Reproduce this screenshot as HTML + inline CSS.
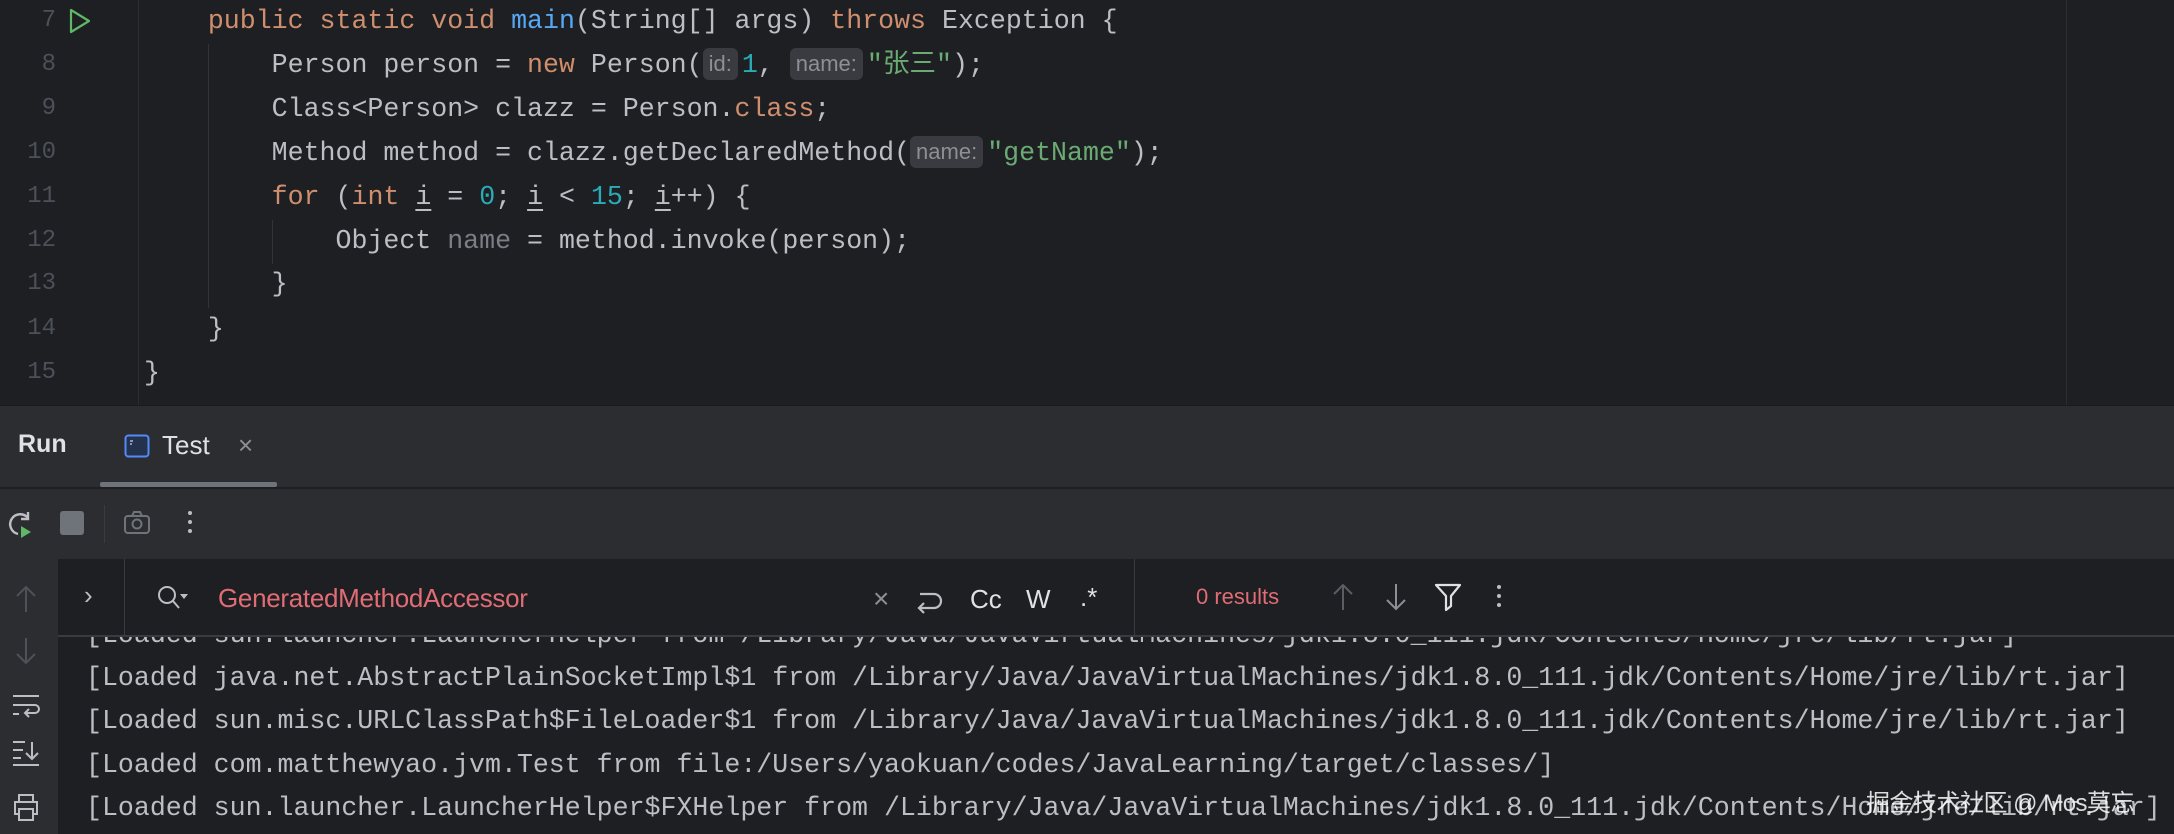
<!DOCTYPE html>
<html><head><meta charset="utf-8"><style>
*{margin:0;padding:0;box-sizing:border-box}
body{width:2174px;height:834px;overflow:hidden;background:#1e1f22;position:relative;font-family:"Liberation Mono","Noto Sans CJK SC",monospace;}
.abs{position:absolute}
.code{position:absolute;left:144px;font-size:26.6px;line-height:44px;height:44px;white-space:pre;color:#bcbec4}
.ln{position:absolute;width:56px;text-align:right;font-size:24px;color:#4b5059;line-height:44px}
.k{color:#cf8e6d}.m{color:#56a8f5}.s{color:#6aab73}.n{color:#2aacb8}.g{color:#7a7e85}
.h{display:inline-block;background:#393b40;color:#8c8f94;font-family:"Liberation Sans",sans-serif;font-size:22px;line-height:32px;padding:0 6px;border-radius:6px;margin-right:4px;vertical-align:1px}
.u{text-decoration:underline;text-underline-offset:5px}
.con{position:absolute;left:86px;font-size:26.6px;line-height:40px;white-space:pre;color:#bcbec4}
.ic{position:absolute;color:#8c8f94;font-family:"Liberation Sans",sans-serif}
</style></head><body>
<!-- editor -->
<div class="abs" style="left:138px;top:0;width:1px;height:405px;background:#2b2d30"></div>
<div class="abs" style="left:2066px;top:0;width:1px;height:405px;background:#2b2d30"></div>
<div class="abs" style="left:208px;top:44px;width:1px;height:264px;background:#313438"></div>
<div class="abs" style="left:272px;top:220px;width:1px;height:44px;background:#313438"></div>
<div class="ln" style="top:-1px;left:0">7</div>
<svg class="abs" style="left:68px;top:8px" width="24" height="26"><path d="M3 2 L21 13 L3 24 Z" fill="none" stroke="#5fb865" stroke-width="2.2" stroke-linejoin="round"/></svg>
<div class="ln" style="top:43px">8</div>
<div class="ln" style="top:87px">9</div>
<div class="ln" style="top:131px">10</div>
<div class="ln" style="top:175px">11</div>
<div class="ln" style="top:219px">12</div>
<div class="ln" style="top:262px">13</div>
<div class="ln" style="top:307px">14</div>
<div class="ln" style="top:351px">15</div>
<div class="code" style="top:-1px">    <span class="k">public static void</span> <span class="m">main</span>(String[] args) <span class="k">throws</span> Exception {</div>
<div class="code" style="top:43px">        Person person = <span class="k">new</span> Person(<span class="h">id:</span><span class="n">1</span>, <span class="h">name:</span><span class="s">"张三"</span>);</div>
<div class="code" style="top:87px">        Class&lt;Person&gt; clazz = Person.<span class="k">class</span>;</div>
<div class="code" style="top:131px">        Method method = clazz.getDeclaredMethod(<span class="h">name:</span><span class="s">"getName"</span>);</div>
<div class="code" style="top:175px">        <span class="k">for</span> (<span class="k">int</span> <span class="u">i</span> = <span class="n">0</span>; <span class="u">i</span> &lt; <span class="n">15</span>; <span class="u">i</span>++) {</div>
<div class="code" style="top:219px">            Object <span class="g">name</span> = method.invoke(person);</div>
<div class="code" style="top:262px">        }</div>
<div class="code" style="top:307px">    }</div>
<div class="code" style="top:351px">}</div>
<!-- tab bar -->
<div class="abs" style="left:0;top:405px;width:2174px;height:83px;background:#2b2d30;border-top:1px solid #1a1b1d;border-bottom:1px solid #1e1f22"></div>
<div class="abs" style="left:18px;top:430px;font-family:'Liberation Sans',sans-serif;font-weight:bold;font-size:25px;color:#dfe1e5">Run</div>
<svg class="abs" style="left:124px;top:434px" width="26" height="24"><rect x="1.5" y="1.5" width="23" height="21" rx="3" fill="#25324d" stroke="#548af7" stroke-width="2"/><path d="M6 7h3M6 10h2" stroke="#9db8f0" stroke-width="1.5"/></svg>
<div class="abs" style="left:162px;top:430px;font-family:'Liberation Sans',sans-serif;font-size:26px;color:#dfe1e5">Test</div>
<div class="ic" style="left:238px;top:430px;font-size:26px">×</div>
<div class="abs" style="left:100px;top:482px;width:177px;height:5px;background:#6f737a;border-radius:2px"></div>
<!-- toolbar -->
<div class="abs" style="left:0;top:489px;width:2174px;height:70px;background:#2b2d30"></div>
<svg class="abs" style="left:4px;top:508px" width="32" height="32"><path d="M24 10 A10 10 0 1 0 14 26" fill="none" stroke="#bcbec4" stroke-width="2.4"/><path d="M24 4 V11 H17" fill="none" stroke="#bcbec4" stroke-width="2.4"/><path d="M17 18 L27 24 L17 30 Z" fill="#5fb865"/></svg>
<div class="abs" style="left:60px;top:511px;width:24px;height:24px;background:#6f737a;border-radius:3px"></div>
<div class="abs" style="left:104px;top:505px;width:1px;height:38px;background:#393b40"></div>
<svg class="abs" style="left:123px;top:510px" width="28" height="26"><rect x="2" y="6" width="24" height="17" rx="3" fill="none" stroke="#6f737a" stroke-width="2"/><path d="M9 6 L11 2 H17 L19 6" fill="none" stroke="#6f737a" stroke-width="2"/><circle cx="14" cy="14" r="4.5" fill="none" stroke="#6f737a" stroke-width="2"/></svg>
<div class="abs" style="left:188px;top:511px;width:4px;height:4px;background:#bcbec4;border-radius:2px;box-shadow:0 9px 0 #bcbec4,0 18px 0 #bcbec4"></div>
<!-- console (under search bar) -->
<div style="position:absolute;left:0;top:559px;width:2174px;height:275px;overflow:hidden">
<div class="con" style="top:56px">[Loaded sun.launcher.LauncherHelper from /Library/Java/JavaVirtualMachines/jdk1.8.0_111.jdk/Contents/Home/jre/lib/rt.jar]</div>
<div class="con" style="top:99px">[Loaded java.net.AbstractPlainSocketImpl$1 from /Library/Java/JavaVirtualMachines/jdk1.8.0_111.jdk/Contents/Home/jre/lib/rt.jar]</div>
<div class="con" style="top:142px">[Loaded sun.misc.URLClassPath$FileLoader$1 from /Library/Java/JavaVirtualMachines/jdk1.8.0_111.jdk/Contents/Home/jre/lib/rt.jar]</div>
<div class="con" style="top:186px">[Loaded com.matthewyao.jvm.Test from file:/Users/yaokuan/codes/JavaLearning/target/classes/]</div>
<div class="con" style="top:229px">[Loaded sun.launcher.LauncherHelper$FXHelper from /Library/Java/JavaVirtualMachines/jdk1.8.0_111.jdk/Contents/Home/jre/lib/rt.jar]</div>
</div>
<!-- left strip -->
<div class="abs" style="left:0;top:559px;width:58px;height:275px;background:#2b2d30"></div>
<svg class="abs" style="left:12px;top:584px" width="28" height="30"><path d="M14 28 V3 M5 12 L14 3 L23 12" fill="none" stroke="#4e5157" stroke-width="2"/></svg>
<svg class="abs" style="left:12px;top:636px" width="28" height="30"><path d="M14 2 V27 M5 18 L14 27 L23 18" fill="none" stroke="#4e5157" stroke-width="2"/></svg>
<svg class="abs" style="left:11px;top:692px" width="30" height="28"><path d="M2 4 H28 M2 13 H24 A4 4 0 0 1 24 21 H14 M18 17 L14 21 L18 25 M2 22 H8" fill="none" stroke="#bcbec4" stroke-width="2"/></svg>
<svg class="abs" style="left:11px;top:739px" width="30" height="28"><path d="M2 3 H14 M2 11 H12 M2 19 H10 M2 26 H28 M21 3 V20 M15 14 L21 20 L27 14" fill="none" stroke="#bcbec4" stroke-width="2"/></svg>
<svg class="abs" style="left:11px;top:792px" width="30" height="30"><path d="M8 9 V3 H22 V9 M8 22 H4 V10 H26 V22 H22 M8 17 H22 V28 H8 Z" fill="none" stroke="#bcbec4" stroke-width="2"/></svg>
<!-- search bar -->
<div class="abs" style="left:58px;top:559px;width:2116px;height:78px;background:#1e1f22;border-bottom:2px solid #393b40"></div>
<div class="abs" style="left:124px;top:559px;width:1px;height:76px;background:#393b40"></div>
<div class="abs" style="left:1134px;top:559px;width:1px;height:76px;background:#393b40"></div>
<div class="ic" style="left:84px;top:580px;font-size:26px;color:#bcbec4">›</div>
<svg class="abs" style="left:156px;top:584px" width="34" height="30"><circle cx="11" cy="11" r="8" fill="none" stroke="#bcbec4" stroke-width="2"/><path d="M17 17 L23 24" stroke="#bcbec4" stroke-width="2"/><path d="M24 10 L32 10 L28 15 Z" fill="#bcbec4"/></svg>
<div class="abs" style="left:218px;top:583px;font-family:'Liberation Sans',sans-serif;font-size:26px;color:#e06c75;letter-spacing:-0.3px">GeneratedMethodAccessor</div>
<div class="ic" style="left:873px;top:583px;font-size:28px">×</div>
<svg class="abs" style="left:914px;top:584px" width="30" height="32"><path d="M6 10 H20 A7 7 0 0 1 20 24 H5 M10 19 L5 24 L10 29" fill="none" stroke="#bcbec4" stroke-width="2.2"/></svg>
<div class="abs" style="left:970px;top:584px;font-family:'Liberation Sans',sans-serif;font-size:26px;color:#dfe1e5">Cc</div>
<div class="abs" style="left:1026px;top:584px;font-family:'Liberation Sans',sans-serif;font-size:26px;color:#dfe1e5">W</div>
<div class="abs" style="left:1080px;top:582px;font-family:'Liberation Sans',sans-serif;font-size:26px;color:#dfe1e5">.*</div>
<div class="abs" style="left:1196px;top:584px;font-family:'Liberation Sans',sans-serif;font-size:22px;color:#e06c75">0 results</div>
<svg class="abs" style="left:1330px;top:582px" width="26" height="30"><path d="M13 28 V3 M4 12 L13 3 L22 12" fill="none" stroke="#5a5d63" stroke-width="2"/></svg>
<svg class="abs" style="left:1383px;top:582px" width="26" height="30"><path d="M13 2 V27 M4 18 L13 27 L22 18" fill="none" stroke="#8c8f94" stroke-width="2"/></svg>
<svg class="abs" style="left:1434px;top:582px" width="28" height="30"><path d="M2 3 H26 L17 14 V24 L12 28 V14 Z" fill="none" stroke="#dfe1e5" stroke-width="2.2" stroke-linejoin="round"/></svg>
<div class="abs" style="left:1497px;top:585px;width:4px;height:4px;background:#bcbec4;border-radius:2px;box-shadow:0 9px 0 #bcbec4,0 18px 0 #bcbec4"></div>
<div class="abs" style="left:1866px;top:783px;font-family:'Liberation Sans','Noto Sans CJK SC',sans-serif;font-size:24px;color:rgba(255,255,255,0.85);white-space:nowrap;letter-spacing:-0.5px">掘金技术社区 @ Mos莫忘</div>
</body></html>
